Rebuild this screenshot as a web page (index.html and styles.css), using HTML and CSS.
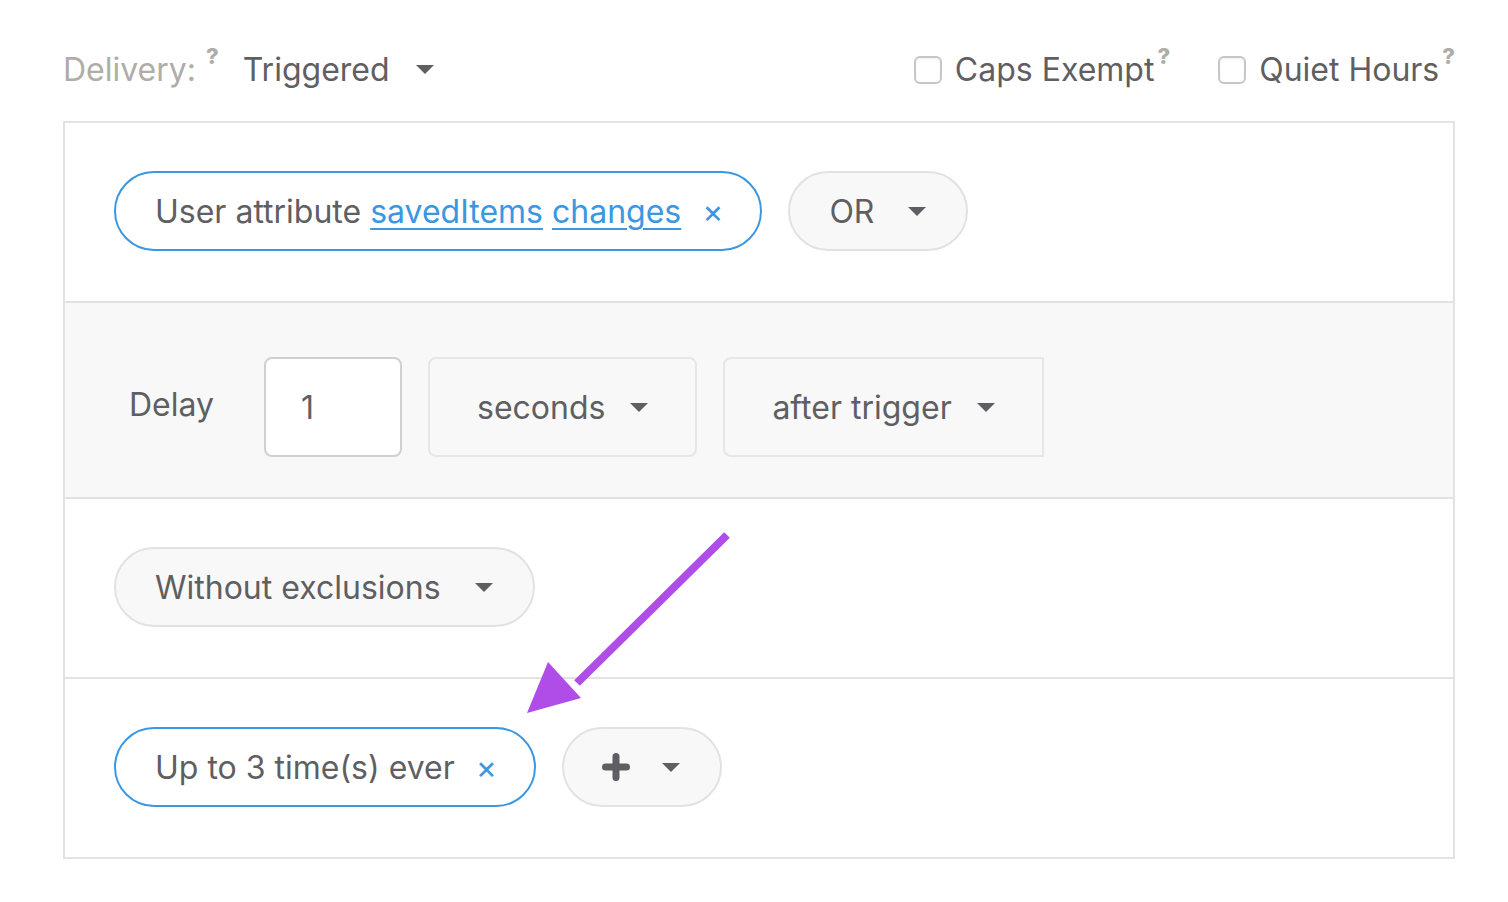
FILE: index.html
```html
<!DOCTYPE html>
<html>
<head>
<meta charset="utf-8">
<link rel="stylesheet" href="styles.css">
</head>
<body>
<div class="page">
  <div class="header">
    <div class="delivery">
      <span class="label">Delivery:</span><sup class="help">?</sup>
      <span class="value">Triggered</span>
      <span class="caret"></span>
    </div>
    <div class="options">
      <label class="check"><span class="box"></span><span class="ctext">Caps Exempt</span><sup class="help">?</sup></label>
      <label class="check"><span class="box"></span><span class="ctext">Quiet Hours</span><sup class="help">?</sup></label>
    </div>
  </div>

  <div class="panel">
    <div class="row">
      <div class="pill pill-blue">
        <span>User attribute <a class="link">savedItems</a> <a class="link">changes</a></span>
        <span class="close">×</span>
      </div>
      <div class="pill pill-gray">
        <span>OR</span><span class="caret"></span>
      </div>
    </div>

    <div class="row row-delay">
      <span class="delay-label">Delay</span>
      <div class="input">1</div>
      <div class="select sel-seconds"><span>seconds</span><span class="caret"></span></div>
      <div class="select sel-after"><span>after trigger</span><span class="caret"></span></div>
    </div>

    <div class="row">
      <div class="pill pill-gray">
        <span>Without exclusions</span><span class="caret"></span>
      </div>
    </div>

    <div class="row">
      <div class="pill pill-blue">
        <span>Up to 3 time(s) ever</span>
        <span class="close">×</span>
      </div>
      <div class="pill pill-gray pill-plus">
        <svg class="plus" width="28" height="28" viewBox="0 0 28 28"><path d="M14 3.5v21M3.5 14h21" stroke="#5f5f63" stroke-width="7" stroke-linecap="round"/></svg>
        <span class="caret"></span>
      </div>
    </div>

    <svg class="arrow" width="220" height="200" viewBox="0 0 220 200">
      <line x1="200" y1="5" x2="50" y2="153" stroke="#b04ce8" stroke-width="8"/>
      <polygon points="0,183 21,132 54,168" fill="#b04ce8"/>
    </svg>
  </div>
</div>
</body>
</html>
```

FILE: styles.css
```css
* { box-sizing: border-box; }
html, body { margin: 0; padding: 0; background: #ffffff; }
body {
  font-family: "Inter", "Noto Sans", "Liberation Sans", sans-serif;
  font-size: 32px;
  color: #5f5f63;
}
.page {
  padding: 0 53px 0 63px;
}
.header {
  height: 121px;
  padding-top: 18px;
  display: flex;
  align-items: center;
  justify-content: space-between;
}
.delivery, .options, .check {
  display: flex;
  align-items: center;
}
.label { color: #b0aca8; }
.help {
  font-size: 22px;
  font-weight: 800;
  color: #b0aca8;
  align-self: flex-start;
  margin-top: -5px;
  margin-left: 10px;
  line-height: 1;
}
.delivery .value { margin-left: 24px; }
.delivery .caret { margin-left: 26px; }
.check { margin-left: 48px; }
.check .box {
  width: 28px;
  height: 28px;
  border: 2px solid #c6c6c6;
  border-radius: 6px;
  background: #fff;
  margin-right: 13px;
  box-shadow: inset 0 1px 2px rgba(0,0,0,0.06);
}
.check .help { margin-left: 3px; }
.caret {
  display: inline-block;
  width: 0;
  height: 0;
  border-left: 9px solid transparent;
  border-right: 9px solid transparent;
  border-top: 9px solid #5f5f63;
}
.panel {
  position: relative;
  border: 2px solid #e2e2e2;
}
.row {
  display: flex;
  align-items: center;
  gap: 26px;
  padding: 48px 49px 50px;
  border-top: 2px solid #e2e2e2;
}
.row:first-child { border-top: none; }
.row-delay {
  background: #f8f8f8;
  padding: 54px 49px 40px;
  gap: 26px;
}
.pill {
  height: 80px;
  border-radius: 40px;
  display: flex;
  align-items: center;
  padding: 0 40px 0 39px;
  white-space: nowrap;
}
.pill-blue {
  border: 2px solid #3a97e2;
  background: #fff;
  padding-right: 37px;
}
.pill-gray {
  border: 2px solid #e2e2e2;
  background: #f8f8f8;
}
.pill-gray .caret { margin-left: 34px; }
.pill-plus { padding: 0 40px 0 38px; }
.pill-plus .caret { margin-left: 32px; }
.link {
  color: #3a97e2;
  text-decoration: underline;
  text-decoration-thickness: 2px;
  text-underline-offset: 5px;
}
.close {
  color: #3a97e2;
  margin-left: 21px;
  font-size: 32px;
}
.delay-label {
  margin-left: 15px;
  margin-right: 24px;
  margin-top: -6px;
}
.input {
  width: 138px;
  height: 100px;
  background: #fff;
  border: 2px solid #d0d0d0;
  border-radius: 8px;
  display: flex;
  align-items: center;
  padding-left: 35px;
}
.select {
  height: 100px;
  background: #f8f8f8;
  border: 2px solid #e6e6e6;
  border-radius: 8px;
  display: flex;
  align-items: center;
  padding: 0 47px;
}
.select .caret { margin-left: 25px; }
.sel-after { border-radius: 8px 0 0 8px; }
.arrow {
  position: absolute;
  left: 462px;
  top: 407px;
}
```
